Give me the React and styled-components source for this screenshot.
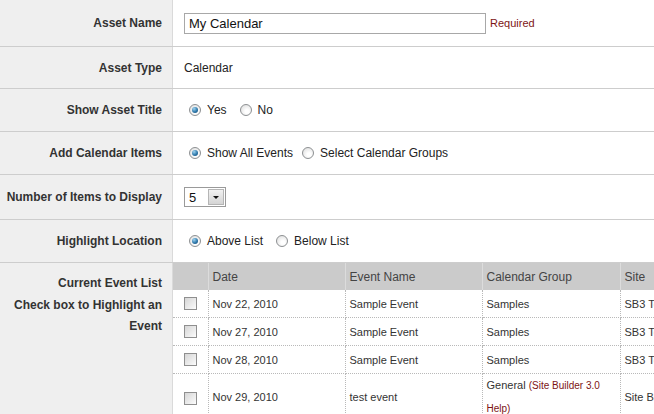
import React from 'react';
import styled, { createGlobalStyle } from 'styled-components';

const GlobalStyle = createGlobalStyle`
  html, body {
    margin: 0;
    overflow: hidden;
    background: #fff;
    font-family: "Liberation Sans", Arial, sans-serif;
  }
`;

const Form = styled.div`
  width: 100%;
`;

const Row = styled.div`
  display: grid;
  grid-template-columns: 173px 1fr;
  box-sizing: border-box;
  height: ${(p) => (p.$h ? `${p.$h}px` : 'auto')};
  border-bottom: ${(p) => (p.$last ? 'none' : '1px solid #cdcdcd')};
`;

const Label = styled.div`
  box-sizing: border-box;
  background: #efefef;
  border-right: 1px solid #dadada;
  display: flex;
  flex-direction: column;
  align-items: flex-end;
  justify-content: ${(p) => (p.$top ? 'flex-start' : 'center')};
  text-align: right;
  white-space: nowrap;
  padding: ${(p) => (p.$top ? '10px 10px 0 0' : '0 10px 0 0')};
  font-size: 12px;
  font-weight: bold;
  line-height: ${(p) => (p.$top ? '21.5px' : 'normal')};
  color: #333;
`;

const Field = styled.div`
  display: flex;
  align-items: center;
  padding: 0 11px;
  font-size: 12px;
  color: #222;
  overflow: hidden;
`;

const TableField = styled.div`
  overflow: hidden;
`;

const TextInput = styled.div`
  box-sizing: border-box;
  width: 302px;
  height: 21px;
  border: 1px solid #a8a8a8;
  padding: 0 4px;
  display: flex;
  align-items: center;
  font-size: 13px;
  color: #111;
`;

const Required = styled.span`
  margin-left: 4px;
  font-size: 11px;
  color: #7d1414;
`;

const Option = styled.label`
  display: inline-flex;
  align-items: center;
  margin-right: ${(p) => p.$gap || 9}px;
  font-size: 12px;
  color: #222;
`;

const Radio = styled.span`
  position: relative;
  box-sizing: border-box;
  width: 12px;
  height: 12px;
  margin: 0 6px 0 5px;
  border-radius: 50%;
  border: 1px solid #8d9092;
  background: radial-gradient(circle at 60% 65%, #ffffff 20%, #d9d9d9 100%);

  &::after {
    content: '';
    display: ${(p) => (p.$checked ? 'block' : 'none')};
    position: absolute;
    left: 2px;
    top: 2px;
    width: 6px;
    height: 6px;
    border-radius: 50%;
    background: radial-gradient(circle at 35% 30%, #9ed3f0 0%, #2f79ab 55%, #14476e 100%);
  }
`;

const Select = styled.div`
  box-sizing: border-box;
  width: 42px;
  height: 20px;
  border: 1px solid #9a9a9a;
  display: flex;
  align-items: center;
  justify-content: space-between;
  padding: 1px 1px 1px 4px;
  font-size: 13px;
  color: #111;
`;

const SelectButton = styled.span`
  box-sizing: border-box;
  width: 16px;
  height: 100%;
  border: 1px solid #b5b5b5;
  background: linear-gradient(#f2f2f2, #d4d4d4);
  display: flex;
  align-items: center;
  justify-content: center;

  &::after {
    content: '';
    border-left: 3px solid transparent;
    border-right: 3px solid transparent;
    border-top: 3px solid #111;
  }
`;

const Table = styled.table`
  border-collapse: collapse;
  table-layout: fixed;
  width: 620px;
  font-size: 11px;
  color: #333;
`;

const Th = styled.th`
  background: #cbcbcb;
  height: 27px;
  padding: 0 4px;
  text-align: left;
  font-weight: normal;
  font-size: 12px;
  color: #444;
  border-left: ${(p) => (p.$first ? 'none' : '1px solid #dcdcdc')};
  white-space: nowrap;
  overflow: hidden;
`;

const Td = styled.td`
  height: ${(p) => (p.$tall ? 46 : 27)}px;
  padding: 0 4px;
  vertical-align: middle;
  line-height: ${(p) => (p.$tall ? '22px' : 'normal')};
  border: 1px dotted #b9b9b9;
  border-left: ${(p) => (p.$first ? 'none' : '1px dotted #b9b9b9')};
  border-top: none;
  text-align: ${(p) => (p.$center ? 'center' : 'left')};
  white-space: nowrap;
  overflow: hidden;
`;

const Check = styled.span`
  display: inline-block;
  vertical-align: middle;
  box-sizing: border-box;
  width: 13px;
  height: 13px;
  border: 1px solid #8f8f8f;
  background: linear-gradient(135deg, #d6d6d6 0%, #f4f4f4 80%, #ffffff 100%);
`;

const GroupNote = styled.span`
  color: #7d1414;
  font-size: 10px;
`;

const events = [
  { date: 'Nov 22, 2010', name: 'Sample Event', group: 'Samples', site: 'SB3 Test Site' },
  { date: 'Nov 27, 2010', name: 'Sample Event', group: 'Samples', site: 'SB3 Test Site' },
  { date: 'Nov 28, 2010', name: 'Sample Event', group: 'Samples', site: 'SB3 Test Site' },
  { date: 'Nov 29, 2010', name: 'test event', group: 'General', note: ['(Site Builder 3.0', 'Help)'], site: 'Site Builder 3.0 Help' },
];

const App = () => {
  return (
    <>
      <GlobalStyle />
      <Form>
        <Row $h={47}>
          <Label>Asset Name</Label>
          <Field>
            <TextInput>My Calendar</TextInput>
            <Required>Required</Required>
          </Field>
        </Row>
        <Row $h={42}>
          <Label>Asset Type</Label>
          <Field>Calendar</Field>
        </Row>
        <Row $h={43}>
          <Label>Show Asset Title</Label>
          <Field>
            <Option $gap={8}><Radio $checked />Yes</Option>
            <Option><Radio />No</Option>
          </Field>
        </Row>
        <Row $h={43}>
          <Label>Add Calendar Items</Label>
          <Field>
            <Option $gap={4}><Radio $checked />Show All Events</Option>
            <Option><Radio />Select Calendar Groups</Option>
          </Field>
        </Row>
        <Row $h={45}>
          <Label>Number of Items to Display</Label>
          <Field>
            <Select>
              5
              <SelectButton />
            </Select>
          </Field>
        </Row>
        <Row $h={43}>
          <Label>Highlight Location</Label>
          <Field>
            <Option $gap={8}><Radio $checked />Above List</Option>
            <Option><Radio />Below List</Option>
          </Field>
        </Row>
        <Row $last>
          <Label $top>
            <span>Current Event List</span>
            <span>Check box to Highlight an</span>
            <span>Event</span>
          </Label>
          <TableField>
            <Table>
              <colgroup>
                <col style={{ width: 35 }} />
                <col style={{ width: 137 }} />
                <col style={{ width: 137 }} />
                <col style={{ width: 138 }} />
                <col style={{ width: 173 }} />
              </colgroup>
              <thead>
                <tr>
                  <Th $first></Th>
                  <Th>Date</Th>
                  <Th>Event Name</Th>
                  <Th>Calendar Group</Th>
                  <Th>Site</Th>
                </tr>
              </thead>
              <tbody>
                {events.map((ev) => (
                  <tr key={ev.date}>
                    <Td $first $center $tall={!!ev.note}><Check /></Td>
                    <Td $tall={!!ev.note}>{ev.date}</Td>
                    <Td $tall={!!ev.note}>{ev.name}</Td>
                    <Td $tall={!!ev.note}>
                      {ev.group}
                      {ev.note && (
                        <>
                          {' '}<GroupNote>{ev.note[0]}</GroupNote>
                          <br />
                          <GroupNote>{ev.note[1]}</GroupNote>
                        </>
                      )}
                    </Td>
                    <Td $tall={!!ev.note}>{ev.site}</Td>
                  </tr>
                ))}
              </tbody>
            </Table>
          </TableField>
        </Row>
      </Form>
    </>
  );
};

export default App;
